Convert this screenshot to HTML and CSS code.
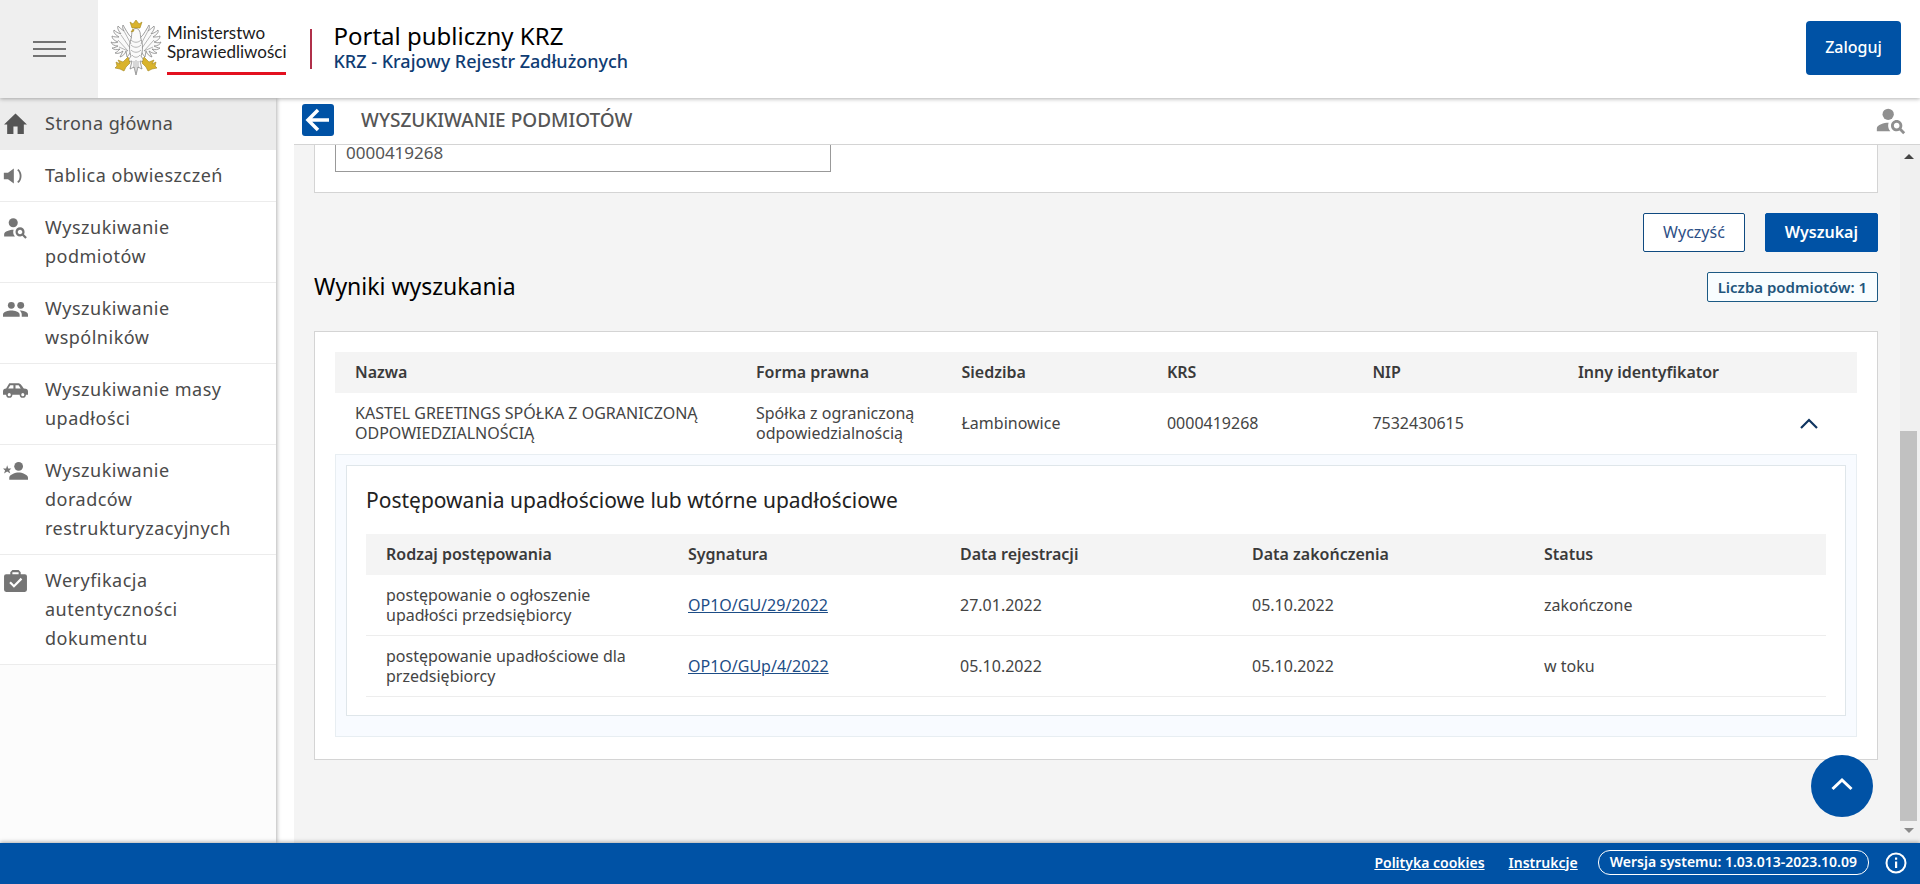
FILE: index.html
```html
<!DOCTYPE html>
<html lang="pl">
<head>
<meta charset="utf-8">
<title>Portal publiczny KRZ</title>
<link rel="stylesheet" href="styles.css">
</head>
<body>
<svg class="defs" aria-hidden="true">
  <symbol id="i-person-search" viewBox="0 0 24 24"><circle cx="10" cy="8" r="4"/><path d="M10.350 14.010C7.620 13.910 2 15.270 2 18v2h9.540c-2.470-2.760-1.230-5.890-1.190-5.990z"/><path d="M19.430 18.020c.36-.59.57-1.280.57-2.020 0-2.210-1.790-4-4-4s-4 1.790-4 4 1.790 4 4 4c.74 0 1.430-.22 2.020-.57L20.590 22 22 20.590zM16 18c-1.100 0-2-.9-2-2s.9-2 2-2 2 .9 2 2-.9 2-2 2z"/></symbol>
</svg>
<header class="header">
  <button class="menu-button" aria-label="Menu"><span></span><span></span><span></span></button>
  <div class="ministry">
    <svg class="eagle" viewBox="0 0 52 56" aria-hidden="true">
      <g fill="#fafafa" stroke="#888" stroke-width=".8" stroke-linejoin="round">
        <path d="M22 18C18 15 15 8 13 5c-1 2 0 4 1 6C11 9 9 7 8 6c-1 3 1 5 3 8-3-1-5-2-7-4-1 3 2 5 5 7-3 0-5 0-7-1 0 3 3 5 6 6-3 1-5 1-7 0 1 3 4 4 7 4-2 1-4 2-6 2 2 2 5 2 8 1-2 2-3 3-5 4 3 1 5 0 8-2l-3 6c3-1 5-3 6-6l1 6c2-2 3-4 4-6z"/>
        <path d="M30 18c4-3 7-10 9-13 1 2 0 4-1 6 3-2 5-4 6-5 1 3-1 5-3 8 3-1 5-2 7-4 1 3-2 5-5 7 3 0 5 0 7-1 0 3-3 5-6 6 3 1 5 1 7 0-1 3-4 4-7 4 2 1 4 2 6 2-2 2-5 2-8 1 2 2 3 3 5 4-3 1-5 0-8-2l3 6c-3-1-5-3-6-6l-1 6c-2-2-3-4-4-6z"/>
        <path d="M23 10c-2 3-1 6-2 9-2 5-2 12 0 17l-4 6 5-1-2 8 4-2 2 8 2-8 4 2-2-8 5 1-4-6c2-5 2-12 0-17-1-3 0-6-2-9-2-2-4-2-6 0z"/>
        <path d="M21 20c3 3 7 3 10 0M21 25c3 3 7 3 10 0M21 30c3 3 7 3 10 0M22 35c2 3 6 3 8 0M24 41v7M26 40v13M28 41v7M14 11l7 13M11 15l9 13M8 20l10 11M9 27l9 4M38 11l-7 13M41 15l-9 13M44 20L34 31M43 27l-9 4" fill="none" stroke-width=".6"/>
      </g>
      <g fill="#d9b32c" stroke="#a3861f" stroke-width=".6">
        <path d="M22 8l-2-6 3 2 3-4 3 4 3-2-2 6zM23 9l-2 3 3-1zM18 37l-5 5-5-2 2 4-4-2 1 4-2 2 5 1 4 2 2-4 4-4zM34 37l5 5 5-2-2 4 4-2-1 4 2 2-5 1-4 2-2-4-4-4z"/>
      </g>
    </svg>
    <div class="ministry-name">Ministerstwo<br>Sprawiedliwości</div>
  </div>
  <div class="portal">
    <div class="portal-title">Portal publiczny KRZ</div>
    <div class="portal-subtitle">KRZ - Krajowy Rejestr Zadłużonych</div>
  </div>
  <button class="login">Zaloguj</button>
</header>
<div class="body">
  <nav class="sidebar">
    <a class="nav-item active" href="#"><svg viewBox="0 0 24 24"><path d="M10 21v-7h4v7h6v-9h3L12 1.500 1 12h3v9z"/></svg><span>Strona główna</span></a>
    <a class="nav-item" href="#"><svg class="small" viewBox="0 0 24 24"><path d="M1 8v8h5l7 5V3L6 8zM17 5c4 3 4 11 0 14l1.500 1.500c5-4 5-13 0-17z"/></svg><span>Tablica obwieszczeń</span></a>
    <a class="nav-item" href="#"><svg viewBox="1 3 22 20"><use href="#i-person-search" width="24" height="24"/></svg><span>Wyszukiwanie podmiotów</span></a>
    <a class="nav-item" href="#"><svg viewBox="0 0 24 24"><circle cx="8" cy="8" r="3.300"/><circle cx="17" cy="8" r="3.300"/><path d="M0 19v-2c0-3 5-4 8-4s8 1 8 4v2zM16 13c3 0 8 1 8 4v2h-6v-2c0-2-1-3-2-4z"/></svg><span>Wyszukiwanie wspólników</span></a>
    <a class="nav-item" href="#"><svg viewBox="0 0 24 24"><path fill-rule="evenodd" d="M6 5h9c2 0 4 4 5 5 3 0 4 1 4 3v3h-2a3 3 0 0 1-6 0H9a3 3 0 0 1-6 0H0v-3c0-2 1-3 3-3zm1 2-2 3h5V7zm5 0v3h5l-2-3zM4.500 16a1.500 1.500 0 0 0 3 0 1.500 1.500 0 0 0-3 0zm13 0a1.500 1.500 0 0 0 3 0 1.500 1.500 0 0 0-3 0z"/></svg><span>Wyszukiwanie masy upadłości</span></a>
    <a class="nav-item" href="#"><svg viewBox="0 0 24 24"><circle cx="15" cy="7" r="4.200"/><path d="M6 20v-2c0-3 6-5 9-5s9 2 9 5v2zM4 6l1 3h3l-2 2 1 3-3-2-3 2 1-3-2-2h3z"/></svg><span>Wyszukiwanie doradców restrukturyzacyjnych</span></a>
    <a class="nav-item" href="#"><svg viewBox="0 0 24 24"><path fill-rule="evenodd" d="M9 1h6l2 2v2h4q2 0 2 2v13q0 2-2 2H3q-2 0-2-2V7q0-2 2-2h4V3zm0 2v2h6V3zm1.500 15 8-8L17 8.500l-6.500 6.500-3-3L6 13.500z"/></svg><span>Weryfikacja autentyczności dokumentu</span></a>
  </nav>
  <main class="main">
    <div class="page-bar">
      <button class="back" aria-label="Wstecz"><svg viewBox="0 0 32 32"><path d="M27 16H7M16 6L6 16l10 10" fill="none" stroke="#fff" stroke-width="3.500"/></svg></button>
      <h1 class="page-title">WYSZUKIWANIE PODMIOTÓW</h1>
      <svg class="page-icon" viewBox="0 0 24 24"><use href="#i-person-search" width="24" height="24"/></svg>
    </div>
    <div class="viewport">
      <div class="content">
        <section class="card form-card"><input class="field" aria-label="KRS" value="0000419268"></section>
        <div class="actions"><button class="btn">Wyczyść</button><button class="btn primary">Wyszukaj</button></div>
        <div class="results-head"><h2>Wyniki wyszukania</h2><span class="badge">Liczba podmiotów: 1</span></div>
        <section class="card results">
          <table class="outer">
            <colgroup><col class="w-name"><col class="w-data" span="5"><col></colgroup>
            <thead><tr><th>Nazwa</th><th>Forma prawna</th><th>Siedziba</th><th>KRS</th><th>NIP</th><th>Inny identyfikator</th><th></th></tr></thead>
            <tbody>
              <tr><td>KASTEL GREETINGS SPÓŁKA Z OGRANICZONĄ ODPOWIEDZIALNOŚCIĄ</td><td>Spółka z ograniczoną odpowiedzialnością</td><td>Łambinowice</td><td>0000419268</td><td>7532430615</td><td></td><td class="toggle-cell"><button class="toggle" aria-label="Zwiń"><svg viewBox="0 0 18 12"><path d="M1 11l8-8 8 8" fill="none" stroke="#0f3460" stroke-width="2.200"/></svg></button></td></tr>
            </tbody>
          </table>
          <div class="details">
            <div class="details-box">
              <h3>Postępowania upadłościowe lub wtórne upadłościowe</h3>
              <table class="inner">
                <colgroup><col class="w-kind"><col class="w-sign"><col class="w-date" span="2"><col></colgroup>
                <thead><tr><th>Rodzaj postępowania</th><th>Sygnatura</th><th>Data rejestracji</th><th>Data zakończenia</th><th>Status</th></tr></thead>
                <tbody>
                  <tr><td>postępowanie o ogłoszenie upadłości przedsiębiorcy</td><td><a href="#">OP1O/GU/29/2022</a></td><td>27.01.2022</td><td>05.10.2022</td><td>zakończone</td></tr>
                  <tr><td>postępowanie upadłościowe dla przedsiębiorcy</td><td><a href="#">OP1O/GUp/4/2022</a></td><td>05.10.2022</td><td>05.10.2022</td><td>w toku</td></tr>
                </tbody>
              </table>
            </div>
          </div>
        </section>
      </div>
      <div class="scrollbar"><i class="arrow up"></i><i class="space"></i><i class="thumb"></i><i class="arrow down"></i></div>
      <button class="to-top" aria-label="Do góry"><svg viewBox="0 0 22 14"><path d="M1.500 12L11 3l9.500 9" fill="none" stroke="#fff" stroke-width="3"/></svg></button>
    </div>
  </main>
</div>
<footer class="footer">
  <a href="#">Polityka cookies</a><a href="#">Instrukcje</a>
  <span class="version">Wersja systemu: 1.03.013-2023.10.09</span>
  <svg class="info" viewBox="0 0 22 22" aria-label="Informacje"><circle cx="11" cy="11" r="9.500" fill="none" stroke="#fff" stroke-width="2"/><path d="M10 9.500h2.200V16H10zM10 5.500h2.200v2.200H10z" fill="#fff"/></svg>
</footer>
</body>
</html>
```

FILE: styles.css
```css
* { box-sizing: border-box; }
body { margin: 0; height: 100vh; display: flex; flex-direction: column; font-family: "Noto Sans", sans-serif; font-size: 16px; line-height: 20px; color: #333; background: #fff; overflow: hidden; }
button, input { font: inherit; margin: 0; }
h1, h2, h3 { margin: 0; font-weight: 500; }
.defs { position: absolute; width: 0; height: 0; }

.header { flex: none; height: 98px; display: flex; align-items: center; position: relative; z-index: 3; background: #fff; box-shadow: 0 1px 4px rgba(0, 0, 0, .3); }
.menu-button { width: 98px; height: 98px; border: 0; background: #efefef; display: flex; flex-direction: column; align-items: center; justify-content: center; gap: 5px; }
.menu-button span { width: 33px; height: 2px; background: #737373; }
.ministry { display: flex; align-items: center; gap: 5px; margin-left: 12px; }
.eagle { width: 52px; height: 56px; margin-bottom: 2px; }
.ministry-name { font-family: Lato, sans-serif; font-size: 17px; line-height: 19px; color: #1b1b1b; padding-bottom: 11px; border-bottom: 3px solid #e3101f; }
.portal { margin-left: 24px; padding-left: 21px; border-left: 2px solid #b0304a; height: 40px; display: flex; flex-direction: column; justify-content: center; padding-bottom: 4px; }
.portal-title { font-size: 24px; line-height: 28px; color: #000; }
.portal-subtitle { font-size: 18px; line-height: 22px; color: #0f3c73; font-weight: 500; }
.login { margin-left: auto; margin-right: 19px; margin-bottom: 2px; width: 95px; height: 54px; padding-bottom: 4px; border: 0; border-radius: 4px; background: #0052a5; color: #fff; font-weight: 500; }

.body { flex: 1; min-height: 0; display: flex; }
.sidebar { flex: none; width: 276px; background: #fcfcfc; box-shadow: 1px 0 4px rgba(0, 0, 0, .3); z-index: 1; }
.nav-item { display: flex; align-items: flex-start; padding: 11px 24px 11px 3px; border-bottom: 1px solid #ececec; background: #fff; color: #4a4a4a; text-decoration: none; font-size: 18px; line-height: 29px; letter-spacing: .5px; }
.nav-item svg { flex: none; width: 25px; height: 25px; margin: 3px 17px 0 0; fill: #757575; }
.nav-item svg.small { width: 20px; height: 20px; margin: 5px 22px 0 0; }
.nav-item.active { background: #ececec; }
.nav-item.active svg { fill: #555; }

.main { flex: 1; min-width: 0; display: flex; flex-direction: column; padding-left: 18px; }
.page-bar { flex: none; height: 47px; display: flex; align-items: center; padding: 0 12px 2px 8px; border-bottom: 1px solid #d4d4d4; }
.back { width: 32px; height: 32px; padding: 0; border: 0; border-radius: 3px; background: #0052a5; }
.back svg { display: block; }
.page-title { margin-left: 27px; font-size: 19px; line-height: 24px; color: #555; font-weight: 500; }
.page-icon { width: 34px; height: 34px; margin-left: auto; fill: #909090; }
.viewport { flex: 1; min-height: 0; display: flex; position: relative; background: #f4f4f4; }
.content { flex: 1; min-width: 0; display: flex; flex-direction: column; justify-content: flex-end; overflow: hidden; padding: 0 22px 83px 20px; }
.card { flex: none; background: #fff; border: 1px solid #d4d4d4; padding: 20px; }
.form-card { padding-top: 40px; }
.results { padding-bottom: 22px; }
.field { display: block; width: 496px; height: 38px; padding: 0 10px; border: 1px solid #999; background: #fff; color: #555; font-size: 17px; }
.actions { flex: none; display: flex; justify-content: flex-end; gap: 20px; padding: 20px 0; }
.btn { height: 39px; padding: 0 19px; border: 1px solid #0f4a80; border-radius: 2px; background: #fff; color: #2d4f86; }
.btn.primary { background: #0052a5; border-color: #0052a5; color: #fff; font-weight: 600; }
.results-head { flex: none; display: flex; align-items: center; justify-content: space-between; padding-bottom: 29px; }
.results-head h2 { font-size: 23px; font-weight: 400; line-height: 28px; padding-bottom: 2px; color: #000; }
.badge { padding: 4px 10px; border: 1px solid #1c5a84; border-radius: 2px; background: #f8fdff; color: #1f557c; font-size: 15px; font-weight: 600; }

table { width: 100%; border-collapse: collapse; table-layout: fixed; }
th { height: 41px; padding: 0 20px; text-align: left; font-weight: 600; color: #3a3a3a; background: #f4f4f4; }
td { height: 61px; padding: 0 20px; color: #444; }
.w-name { width: 401px; }
.w-data { width: 13.5%; }
.toggle-cell { text-align: center; padding: 0; }
.toggle { border: 0; background: none; padding: 4px 2px 0 0; }
.toggle svg { width: 18px; height: 12px; display: block; }
.details { border: 1px solid #e8eef2; background: #f8fbff; padding: 10px 10px 20px; }
.details-box { border: 1px solid #dfe6ea; background: #fff; padding: 20px 19px 18px; }
.details h3 { font-size: 21px; font-weight: 400; line-height: 28px; color: #222; margin-bottom: 20px; }
.inner td { border-bottom: 1px solid #ededed; }
.inner a { color: #1d4d86; }
.w-kind { width: 302px; }
.w-sign { width: 272px; }
.w-date { width: 20%; }

.scrollbar { flex: none; width: 20px; display: flex; flex-direction: column; align-items: center; background: #f0f0f0; padding: 9px 3px 10px 0; }
.arrow { border: 5px solid transparent; }
.up { border-top: 0; border-bottom-color: #444; }
.down { border-bottom: 0; border-top-color: #8a8a8a; margin-top: 7px; }
.space { flex: 271; }
.thumb { flex: 389; width: 17px; background: #c1c1c1; }
.to-top { position: absolute; right: 47px; bottom: 26px; width: 62px; height: 62px; padding: 0; border: 0; border-radius: 50%; background: #0052a5; display: flex; align-items: center; justify-content: center; }
.to-top svg { width: 22px; height: 14px; margin-bottom: 4px; }

.footer { flex: none; height: 41px; display: flex; align-items: center; justify-content: flex-end; padding: 0 13px 2px 0; background: #0052a5; color: #fff; font-size: 14px; font-weight: 600; z-index: 2; box-shadow: 0 -1px 4px rgba(0, 0, 0, .3); }
.footer a { color: #fff; margin-right: 24px; }
.version { border: 1px solid #fff; border-radius: 12px; padding: 1px 11px 2px; margin-right: 16px; margin-left: -4px; }
.info { width: 22px; height: 22px; }
```
